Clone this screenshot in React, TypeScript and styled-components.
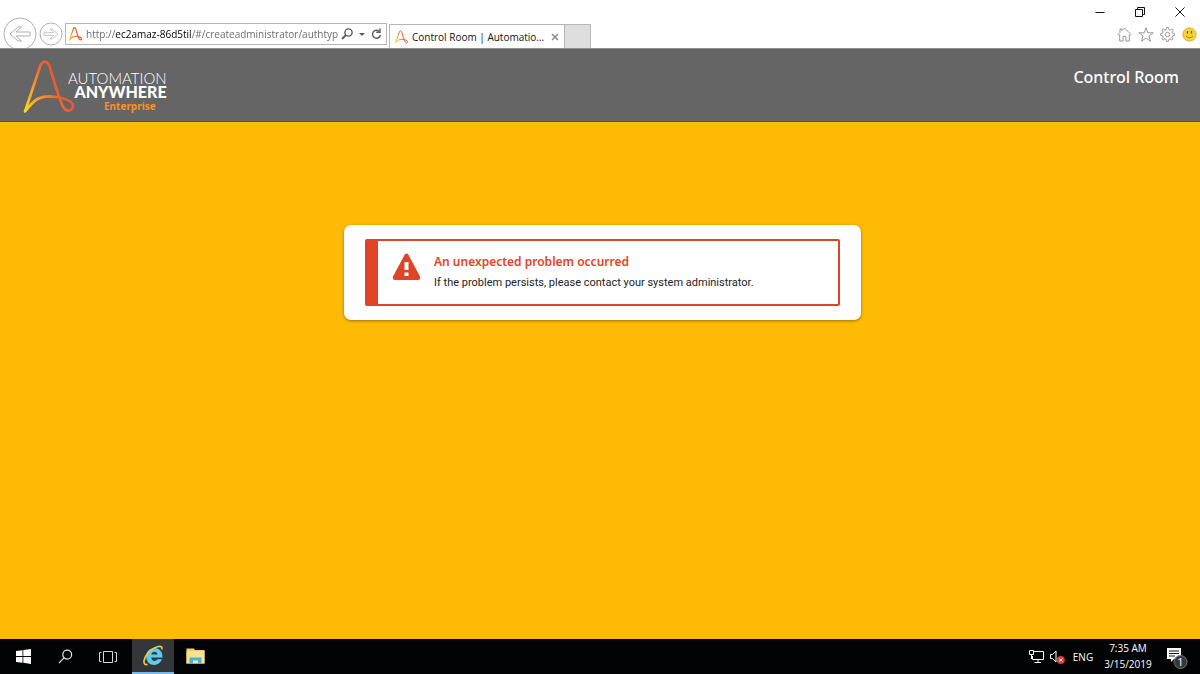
import React from "react";
import styled, { createGlobalStyle } from "styled-components";

const GlobalStyle = createGlobalStyle`
  *, *::before, *::after { box-sizing: border-box; }
  body { margin: 0; background: #fff; font-family: "Open Sans", "Noto Sans", sans-serif; }
  button, input { font: inherit; }
`;

const Desktop = styled.div`
  display: flex;
  flex-direction: column;
  min-height: 100vh;
`;

/* Browser frame */

const BrowserBar = styled.header`
  display: flex;
  align-items: flex-end;
  height: 48px;
  padding-left: 3px;
  background: #fff;
  overflow: hidden;
`;

const IconButton = styled.button<{ $w: number; $h: number }>`
  display: flex;
  align-items: center;
  justify-content: center;
  flex: none;
  width: ${(p) => p.$w}px;
  height: ${(p) => p.$h}px;
  padding: 0;
  border: 0;
  background: transparent;
  color: inherit;
  svg { flex: none; display: block; }
`;

const Navigation = styled.nav`
  display: flex;
  align-items: flex-start;
  height: 31px;
  gap: 2px;
`;

const ForwardSlot = styled.div`
  padding-top: 5px;
`;

const AddressBar = styled.form`
  display: flex;
  align-items: center;
  flex: 0 1 322px;
  min-width: 0;
  height: 22px;
  margin: 0 2px 3px;
  padding-left: 3px;
  border: 1px solid #b5b5b5;
  color: #5a5a5a;
  svg { flex: none; }
`;

const Address = styled.input`
  flex: 1;
  min-width: 0;
  height: 20px;
  margin-left: 4px;
  padding: 0;
  border: 0;
  outline: 0;
  font-size: 10px;
  background: linear-gradient(90deg, #666 29px, #000 29px, #000 106px, #666 106px);
  background-clip: text;
  -webkit-background-clip: text;
  -webkit-text-fill-color: transparent;
`;

const TabStrip = styled.div`
  display: flex;
  height: 24px;
  flex: none;
`;

const Tab = styled.div`
  display: flex;
  align-items: center;
  width: 176px;
  padding: 0 2px 0 5px;
  border: 1px solid #b5b5b5;
  border-bottom: 0;
  font-size: 10px;
  color: #111;
  svg { flex: none; }
`;

const TabTitle = styled.span`
  flex: 1;
  margin-left: 4px;
  white-space: nowrap;
`;

const NewTab = styled.button`
  width: 26px;
  padding: 0;
  border: 1px solid #b9b9b9;
  border-left: 0;
  border-bottom: 0;
  background: #dedede;
`;

const WindowSide = styled.div`
  display: flex;
  flex-direction: column;
  align-items: flex-end;
  height: 48px;
  margin-left: auto;
`;

const WindowButtons = styled.div`
  display: flex;
  height: 24px;
  color: #111;
`;

const ToolButtons = styled.div`
  display: flex;
  color: #8d8d8d;
`;

/* Web page */

const Page = styled.div`
  display: flex;
  flex-direction: column;
  flex: 1;
  background: #ffba05;
`;

const PageHeader = styled.header`
  display: flex;
  justify-content: space-between;
  height: 74px;
  padding: 11px 21px 0 23px;
  background: #656565;
  border-top: 1px solid #8e8e8e;
  border-bottom: 1px solid #57533f;
`;

const Brand = styled.a`
  display: flex;
  text-decoration: none;
  svg { flex: none; display: block; }
`;

const BrandText = styled.span`
  display: flex;
  flex-direction: column;
  align-items: flex-end;
  margin-left: -7px;
  padding-top: 11px;
  color: #fff;
  font-family: Lato, sans-serif;
  line-height: 14px;
`;

const BrandThin = styled.span`
  font-size: 15px;
  font-weight: 300;
`;

const BrandBold = styled.span`
  font-size: 16px;
  font-weight: 900;
`;

const Edition = styled.span`
  padding-right: 11px;
  color: #f7941e;
  font-family: "Noto Sans", sans-serif;
  font-size: 10px;
  font-weight: 700;
  line-height: 15px;
`;

const ProductName = styled.h1`
  margin: 6px 0 0;
  color: #fff;
  font-family: "Noto Sans", sans-serif;
  font-size: 16px;
  font-weight: 500;
  line-height: 22px;
`;

const Content = styled.main`
  display: flex;
  justify-content: center;
  align-items: flex-start;
  padding: 103px 16px 32px 21px;
`;

const Card = styled.section`
  width: 517px;
  max-width: 100%;
  padding: 14px 21px;
  background: #fff;
  border-radius: 7px;
  box-shadow: 0 1px 3px rgba(0, 0, 0, 0.4);
`;

const Alert = styled.div`
  display: flex;
  min-height: 67px;
  padding: 11px 14px;
  border: 2px solid #e04427;
  border-left-width: 13px;
  border-radius: 2px;
  svg { flex: none; display: block; margin-top: 1px; }
`;

const AlertText = styled.div`
  margin-left: 13px;
`;

const AlertTitle = styled.h2`
  margin: 0;
  color: #e04427;
  font-family: "Noto Sans", sans-serif;
  font-size: 12px;
  font-weight: 600;
  line-height: 20px;
`;

const AlertMessage = styled.p`
  margin: 0;
  color: #222;
  font-family: Roboto, sans-serif;
  font-size: 11px;
  line-height: 21px;
`;

/* Taskbar */

const Taskbar = styled.footer`
  display: flex;
  align-items: stretch;
  justify-content: space-between;
  height: 35px;
  background: #020305;
  color: #fff;
`;

const TaskGroup = styled.div`
  display: flex;
  align-items: stretch;
`;

const TaskButton = styled(IconButton)<{ $active?: boolean }>`
  background: ${(p) => (p.$active ? "#35363a" : "transparent")};
  border-bottom: ${(p) => (p.$active ? "2px solid #76b9ed" : "0")};
`;

const Language = styled.button`
  width: 32px;
  padding: 0;
  border: 0;
  background: transparent;
  color: #fff;
  font-size: 10px;
`;

const Clock = styled.time`
  width: 58px;
  padding-top: 1px;
  font-size: 10px;
  line-height: 16px;
  text-align: center;
`;

const Swoosh = ({ id, width, height, stroke }: { id: string; width: number; height: number; stroke: number }) => (
  <svg width={width} height={height} viewBox="0 0 52 54" fill="none" aria-hidden="true">
    <defs>
      <linearGradient id={id} x1="2" y1="50" x2="36" y2="32" gradientUnits="userSpaceOnUse">
        <stop offset="0" stopColor="#ffd91a" />
        <stop offset="0.5" stopColor="#f9962b" />
        <stop offset="1" stopColor="#ee5a30" />
      </linearGradient>
    </defs>
    <path
      d="M2 51.500 L17.500 5.500 C19.200 0.600 24.600 0.600 26.300 5.500 C30 18 33.500 30 38 42 C40 47.500 43 51.500 46.500 50.500 C50.500 49.300 51 44.500 48 42 C40 36.500 24 34.500 15.500 38.500 C10 41 6.500 46 2 51.500 Z"
      stroke={`url(#${id})`}
      strokeWidth={stroke}
      strokeLinejoin="round"
    />
  </svg>
);

const NavArrow = ({ size, r, flip }: { size: number; r: number; flip?: boolean }) => (
  <svg width={size} height={size} viewBox={`${-size / 2} ${-size / 2} ${size} ${size}`} fill="none" stroke="#b0b0b0" aria-hidden="true">
    <circle r={size / 2 - 1} />
    <path
      transform={`scale(${flip ? -r : r} ${r})`}
      d="M-10 0 L-2 -7 H1.500 L-4 -2 H10 V2 H-4 L1.500 7 H-2 Z"
      strokeLinejoin="round"
    />
  </svg>
);

export default function App() {
  return (
    <Desktop>
      <GlobalStyle />
      <BrowserBar>
        <Navigation aria-label="History">
          <IconButton $w={34} $h={34} aria-label="Back">
            <NavArrow size={34} r={1} />
          </IconButton>
          <ForwardSlot>
            <IconButton $w={24} $h={24} aria-label="Forward">
              <NavArrow size={24} r={0.7} flip />
            </IconButton>
          </ForwardSlot>
        </Navigation>
        <AddressBar onSubmit={(e) => e.preventDefault()}>
          <Swoosh id="fav-address" width={13} height={14} stroke={5} />
          <Address
            aria-label="Address"
            spellCheck={false}
            defaultValue="http://ec2amaz-86d5til/#/createadministrator/authtype"
          />
          <IconButton $w={18} $h={20} type="button" aria-label="Search">
            <svg width="12" height="12" viewBox="0 0 12 12" fill="none" stroke="currentColor">
              <circle cx="7.500" cy="4.500" r="3.600" strokeWidth="1.400" />
              <path d="M5 7 L1 11" strokeWidth="1.800" />
            </svg>
          </IconButton>
          <IconButton $w={11} $h={20} type="button" aria-label="Show address list">
            <svg width="6" height="3" viewBox="0 0 6 3"><path d="M0 0 H6 L3 3 Z" fill="currentColor" /></svg>
          </IconButton>
          <IconButton $w={19} $h={20} type="button" aria-label="Refresh">
            <svg width="11" height="12" viewBox="0 0 11 12" fill="none" stroke="currentColor" strokeWidth="1.400">
              <path d="M8.500 3.600 A4 4 0 1 0 9.400 7" />
              <path d="M9 0.500 V4.200 H5.300" />
            </svg>
          </IconButton>
        </AddressBar>
        <TabStrip>
          <Tab>
            <Swoosh id="fav-tab" width={13} height={14} stroke={4} />
            <TabTitle>Control Room | Automatio...</TabTitle>
            <IconButton $w={14} $h={20} aria-label="Close tab">
              <svg width="8" height="8" viewBox="0 0 8 8" stroke="#8a8a8a" strokeWidth="1.500"><path d="M1 1 L7 7 M7 1 L1 7" /></svg>
            </IconButton>
          </Tab>
          <NewTab aria-label="New tab" />
        </TabStrip>
        <WindowSide>
          <WindowButtons>
            <IconButton $w={40} $h={24} aria-label="Minimize">
              <svg width="10" height="10" viewBox="0 0 10 10" stroke="currentColor"><path d="M0.500 5.500 H9.500" /></svg>
            </IconButton>
            <IconButton $w={40} $h={24} aria-label="Restore">
              <svg width="10" height="10" viewBox="0 0 10 10" fill="none" stroke="currentColor">
                <path d="M0.500 2.500 H7.500 V9.500 H0.500 Z M2.500 2.500 V0.500 H9.500 V7.500 H7.500" />
              </svg>
            </IconButton>
            <IconButton $w={40} $h={24} aria-label="Close">
              <svg width="10" height="10" viewBox="0 0 10 10" stroke="currentColor"><path d="M0.500 0.500 L9.500 9.500 M9.500 0.500 L0.500 9.500" /></svg>
            </IconButton>
          </WindowButtons>
          <ToolButtons>
            <IconButton $w={22} $h={20} aria-label="Home">
              <svg width="15" height="15" viewBox="0 0 15 15" fill="none" stroke="currentColor" strokeWidth="0.900" strokeLinejoin="round">
                <path d="M7.500 1 L14 7.500 L13 8.500 L12.300 7.900 V14 H9 V9.500 H6 V14 H2.700 V7.900 L2 8.500 L1 7.500 L3 5.500 V2 H5 V3.500 Z" />
              </svg>
            </IconButton>
            <IconButton $w={22} $h={20} aria-label="Favorites">
              <svg width="16" height="15" viewBox="0 0 16 15" fill="none" stroke="currentColor" strokeWidth="0.900" strokeLinejoin="round">
                <path d="M8 0.800 L9.800 5.800 H15.200 L10.900 9 L12.500 14.200 L8 11 L3.500 14.200 L5.100 9 L0.800 5.800 H6.200 Z" />
              </svg>
            </IconButton>
            <IconButton $w={21} $h={20} aria-label="Tools">
              <svg width="15" height="15" viewBox="0 0 15 15" fill="none" stroke="currentColor" strokeWidth="0.900" strokeLinejoin="round">
                <circle cx="7.500" cy="7.500" r="2.200" />
                <path d="M6.500 0.700 H8.500 L8.900 2.600 L10.200 3.100 L11.800 2 L13 3.300 L11.900 4.900 L12.400 6.200 L14.300 6.500 V8.500 L12.400 8.900 L11.900 10.200 L13 11.800 L11.700 13 L10.100 11.900 L8.900 12.400 L8.500 14.300 H6.500 L6.100 12.400 L4.800 11.900 L3.200 13 L2 11.700 L3.100 10.100 L2.600 8.900 L0.700 8.500 V6.500 L2.600 6.100 L3.100 4.800 L2 3.200 L3.300 2 L4.900 3.100 L6.100 2.600 Z" />
              </svg>
            </IconButton>
            <IconButton $w={22} $h={20} aria-label="Send a smile">
              <svg width="15" height="15" viewBox="0 0 15 15">
                <circle cx="7.500" cy="7.500" r="6.700" fill="#fad232" stroke="#c9a54a" strokeWidth="0.800" />
                <path d="M5.500 4 V6.500 M9.500 4 V6.500" stroke="#665224" strokeWidth="1.200" />
                <path d="M4 9 Q7.500 12.500 11 9" fill="none" stroke="#a47f22" />
              </svg>
            </IconButton>
          </ToolButtons>
        </WindowSide>
      </BrowserBar>

      <Page>
        <PageHeader>
          <Brand href="#" aria-label="Automation Anywhere Enterprise">
            <Swoosh id="brand" width={52} height={54} stroke={2.6} />
            <BrandText>
              <BrandThin>AUTOMATION</BrandThin>
              <BrandBold>ANYWHERE</BrandBold>
              <Edition>Enterprise</Edition>
            </BrandText>
          </Brand>
          <ProductName>Control Room</ProductName>
        </PageHeader>
        <Content>
          <Card>
            <Alert role="alert">
              <svg width="29" height="28" viewBox="0 0 29 28" aria-hidden="true">
                <path d="M12.600 1.800 Q14.500 -0.600 16.400 1.800 L28 23.500 Q29 27 26 27 H3 Q0 27 1 23.500 Z" fill="#e04427" />
                <path d="M12.500 9 H16.500 V17 H12.500 Z M12.500 19.500 H16.500 V23 H12.500 Z" fill="#fff" />
              </svg>
              <AlertText>
                <AlertTitle>An unexpected problem occurred</AlertTitle>
                <AlertMessage>If the problem persists, please contact your system administrator.</AlertMessage>
              </AlertText>
            </Alert>
          </Card>
        </Content>
      </Page>

      <Taskbar>
        <TaskGroup>
          <TaskButton $w={47} $h={35} aria-label="Start">
            <svg width="15" height="15" viewBox="0 0 15 15" fill="#fff"><path d="M0 2 L6.500 1.200 V7 H0 Z M7.300 1.100 L15 0 V7 H7.300 Z M0 7.900 H6.500 V13.700 L0 12.900 Z M7.300 7.900 H15 V15 L7.300 13.800 Z" /></svg>
          </TaskButton>
          <TaskButton $w={37} $h={35} aria-label="Search">
            <svg width="15" height="15" viewBox="0 0 16 16" fill="none" stroke="#e6e6e6" strokeWidth="1.300"><circle cx="9.800" cy="6" r="4.700" /><path d="M6.300 9.500 L1 15" /></svg>
          </TaskButton>
          <TaskButton $w={48} $h={35} aria-label="Task view">
            <svg width="18" height="12" viewBox="0 0 18 12" fill="none" stroke="#d8d8d8"><path d="M4.500 0.500 H13.500 V11.500 H4.500 Z M2.500 1.500 H0.500 V10.500 H2.500 M15.500 1.500 H17.500 V10.500 H15.500" /></svg>
          </TaskButton>
          <TaskButton $w={42} $h={35} $active aria-label="Internet Explorer">
            <svg width="21" height="21" viewBox="0 0 21 21" fill="none">
              <path
                fillRule="evenodd"
                d="M19.500 12.500 H8.300 C8.500 16.600 13 17 14.300 14.300 H19 C17.300 18.300 14.500 20 11.300 20 C6.500 20 3.200 16.500 3.200 11.500 C3.200 6.500 6.800 3 11.400 3 C16.500 3 19.800 7 19.500 12.500 Z M8.400 9.500 H14.500 C14.300 5.800 8.800 5.800 8.400 9.500 Z"
                fill="#5ccbf5"
              />
              <path d="M4.500 19.500 C-1.500 20.500 0.800 12 6.500 6.500 C12 1.200 20.500 -0.800 18.800 4.500" stroke="#f0cc40" strokeWidth="1.600" />
            </svg>
          </TaskButton>
          <TaskButton $w={43} $h={35} aria-label="File Explorer">
            <svg width="19" height="17" viewBox="0 0 19 17">
              <path d="M0.500 0.500 H8 L9 2 H18.500 V15.500 H0.500 Z" fill="#f0cd70" />
              <path d="M0.500 3 H18.500 V15.500 H0.500 Z" fill="#fbe08f" />
              <path d="M3.500 16 V9.500 H15.500 V16 H12 V12.500 H7 V16 Z" fill="#45b3da" />
            </svg>
          </TaskButton>
        </TaskGroup>
        <TaskGroup>
          <TaskButton $w={22} $h={35} aria-label="Network">
            <svg width="15" height="13" viewBox="0 0 15 13" fill="none" stroke="#fff"><path d="M5 1.500 H14.500 V9.500 H3.500 V6 M9 9.500 V12 M5.500 12.500 H12 M0.500 0.500 H4.500 V4.500 H0.500 Z M2.500 4.500 V9" /></svg>
          </TaskButton>
          <TaskButton $w={20} $h={35} aria-label="Volume muted">
            <svg width="15" height="14" viewBox="0 0 15 14" fill="none">
              <path d="M0.500 4.500 H2.500 L6 1 V12 L2.500 8.500 H0.500 Z" stroke="#fff" />
              <circle cx="10.800" cy="10" r="4" fill="#d93a3f" />
              <path d="M9.300 8.500 L12.300 11.500 M12.300 8.500 L9.300 11.500" stroke="#fff" />
            </svg>
          </TaskButton>
          <Language>ENG</Language>
          <Clock dateTime="2019-03-15T07:35">
            7:35 AM
            <br />
            3/15/2019
          </Clock>
          <TaskButton $w={43} $h={35} aria-label="Notifications, 1 new">
            <svg width="25" height="24" viewBox="0 0 25 24">
              <path d="M1 3 H15 V14 H8 L5 17 V14 H1 Z" fill="#fff" />
              <path d="M3 6 H13 M3 8.500 H13 M3 11 H9" stroke="#15161a" />
              <circle cx="14.500" cy="17" r="6.500" fill="#36373b" stroke="#77787c" />
              <text x="14.500" y="21" textAnchor="middle" fill="#fff" fontSize="11">1</text>
            </svg>
          </TaskButton>
        </TaskGroup>
      </Taskbar>
    </Desktop>
  );
}
